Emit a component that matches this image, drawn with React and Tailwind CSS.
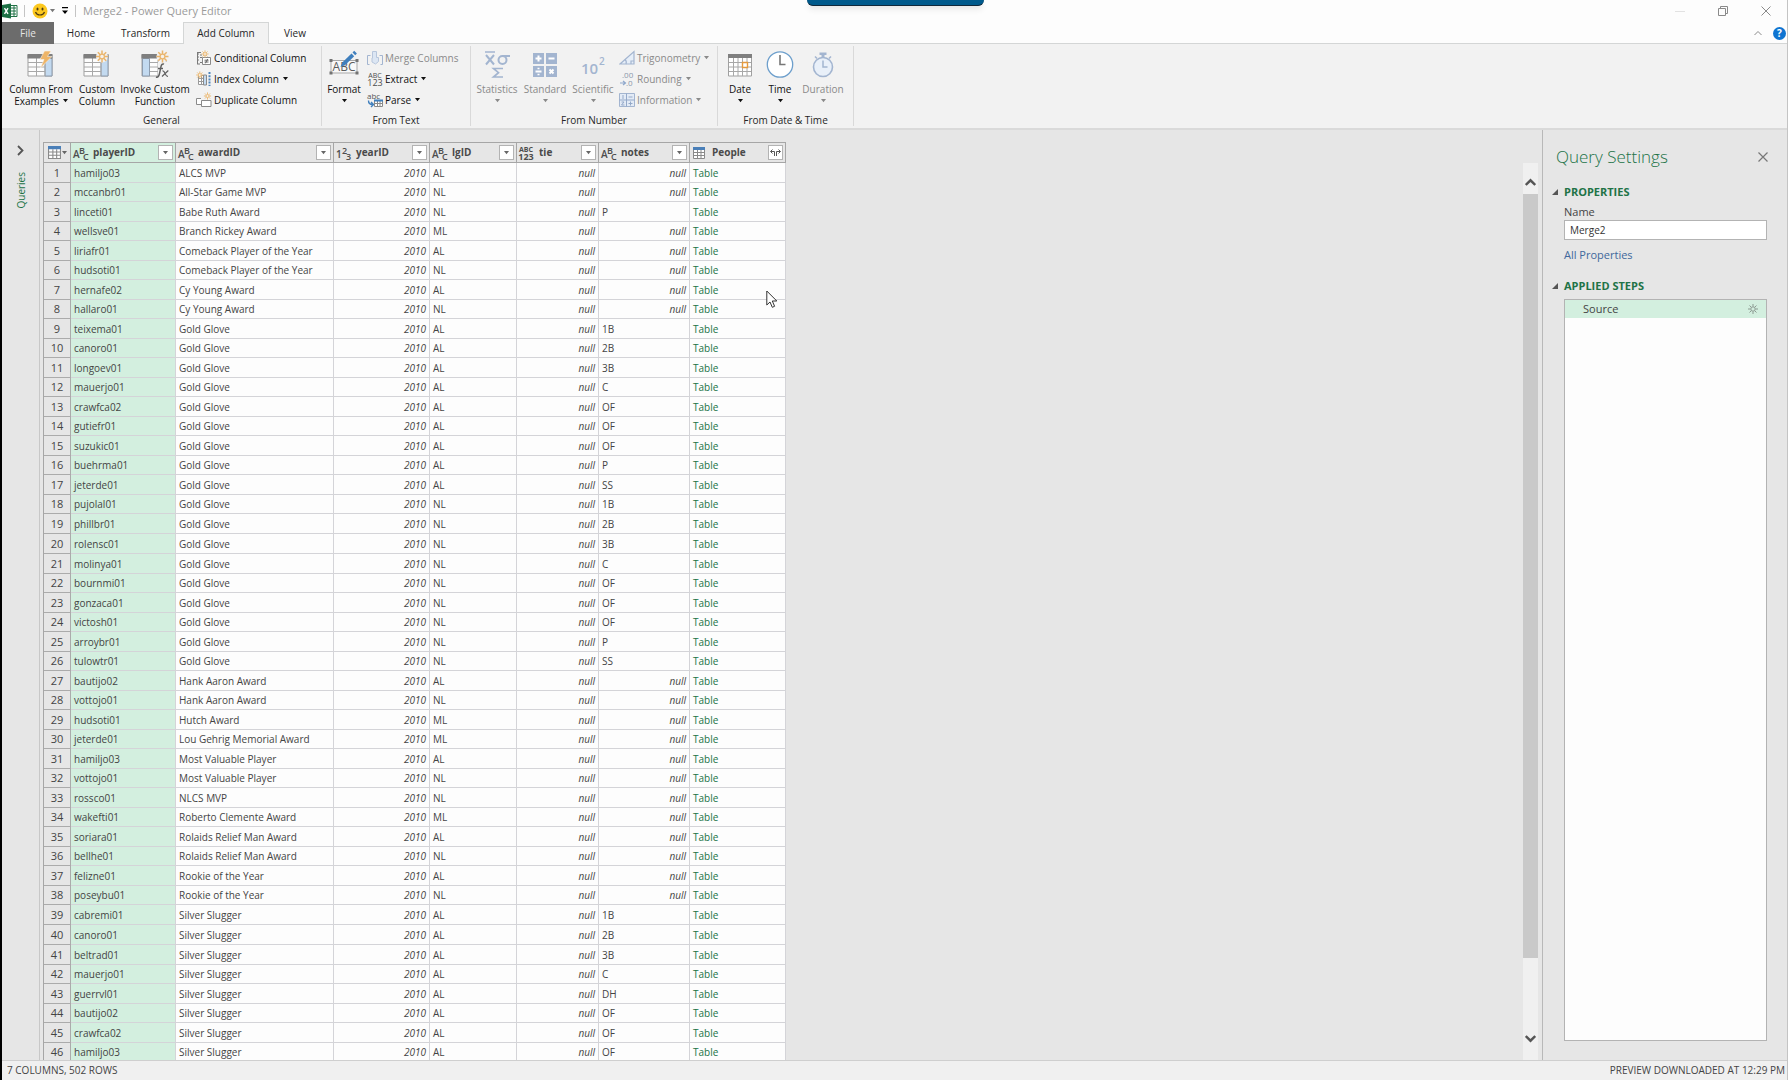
import { useState } from 'react'

const columns = [
    { name: 'playerID', type: 'text', selected: true },
    { name: 'awardID', type: 'text' },
    { name: 'yearID', type: 'number' },
    { name: 'lgID', type: 'text' },
    { name: 'tie', type: 'any' },
    { name: 'notes', type: 'text' },
    { name: 'People', type: 'table' },
]

// player, award, league, notes
const rows = [
    ['hamiljo03', 'ALCS MVP', 'AL', null],
    ['mccanbr01', 'All-Star Game MVP', 'NL', null],
    ['linceti01', 'Babe Ruth Award', 'NL', 'P'],
    ['wellsve01', 'Branch Rickey Award', 'ML', null],
    ['liriafr01', 'Comeback Player of the Year', 'AL', null],
    ['hudsoti01', 'Comeback Player of the Year', 'NL', null],
    ['hernafe02', 'Cy Young Award', 'AL', null],
    ['hallaro01', 'Cy Young Award', 'NL', null],
    ['teixema01', 'Gold Glove', 'AL', '1B'],
    ['canoro01', 'Gold Glove', 'AL', '2B'],
    ['longoev01', 'Gold Glove', 'AL', '3B'],
    ['mauerjo01', 'Gold Glove', 'AL', 'C'],
    ['crawfca02', 'Gold Glove', 'AL', 'OF'],
    ['gutiefr01', 'Gold Glove', 'AL', 'OF'],
    ['suzukic01', 'Gold Glove', 'AL', 'OF'],
    ['buehrma01', 'Gold Glove', 'AL', 'P'],
    ['jeterde01', 'Gold Glove', 'AL', 'SS'],
    ['pujolal01', 'Gold Glove', 'NL', '1B'],
    ['phillbr01', 'Gold Glove', 'NL', '2B'],
    ['rolensc01', 'Gold Glove', 'NL', '3B'],
    ['molinya01', 'Gold Glove', 'NL', 'C'],
    ['bournmi01', 'Gold Glove', 'NL', 'OF'],
    ['gonzaca01', 'Gold Glove', 'NL', 'OF'],
    ['victosh01', 'Gold Glove', 'NL', 'OF'],
    ['arroybr01', 'Gold Glove', 'NL', 'P'],
    ['tulowtr01', 'Gold Glove', 'NL', 'SS'],
    ['bautijo02', 'Hank Aaron Award', 'AL', null],
    ['vottojo01', 'Hank Aaron Award', 'NL', null],
    ['hudsoti01', 'Hutch Award', 'ML', null],
    ['jeterde01', 'Lou Gehrig Memorial Award', 'ML', null],
    ['hamiljo03', 'Most Valuable Player', 'AL', null],
    ['vottojo01', 'Most Valuable Player', 'NL', null],
    ['rossco01', 'NLCS MVP', 'NL', null],
    ['wakefti01', 'Roberto Clemente Award', 'ML', null],
    ['soriara01', 'Rolaids Relief Man Award', 'AL', null],
    ['bellhe01', 'Rolaids Relief Man Award', 'NL', null],
    ['felizne01', 'Rookie of the Year', 'AL', null],
    ['poseybu01', 'Rookie of the Year', 'NL', null],
    ['cabremi01', 'Silver Slugger', 'AL', '1B'],
    ['canoro01', 'Silver Slugger', 'AL', '2B'],
    ['beltrad01', 'Silver Slugger', 'AL', '3B'],
    ['mauerjo01', 'Silver Slugger', 'AL', 'C'],
    ['guerrvl01', 'Silver Slugger', 'AL', 'DH'],
    ['bautijo02', 'Silver Slugger', 'AL', 'OF'],
    ['crawfca02', 'Silver Slugger', 'AL', 'OF'],
    ['hamiljo03', 'Silver Slugger', 'AL', 'OF'],
]

const Caret = ({ className = '' }) => (
    <svg className={`w-[5px] h-[4px] shrink-0 ${className}`} viewBox="0 0 5 4" fill="currentColor"><path d="M0 0h5L2.500 3.300z" /></svg>
)

const Spark = ({ x, y, s = 1 }) => (
    <g transform={`translate(${x} ${y}) scale(${s})`} stroke="#eab56c" strokeWidth="1.5" fill="#f6f1ea">
        <path d="M0-6v12M-6 0h12M-4.2-4.2l8.4 8.4M-4.2 4.2l8.4-8.4" />
        <circle r="2.4" stroke="#eab56c" strokeWidth="1.2" />
    </g>
)

/* ---------- large ribbon icons, 28 x 28 ---------- */

const TableArt = ({ flip }) => (
    <g>
        <path d="M1 5h24v21H1z" fill="#fdfdfd" stroke="#a0a0a0" />
        <path d={flip ? 'M1.5 8.5h7v17.5h-7z' : 'M18 8.5h7v17.5h-7z'} fill="#c3daf0" stroke="#8d9cae" />
        <path d={flip ? 'M9 12.5h16M9 17h16M9 21.5h16M17 8v18' : 'M1 12.5h17M1 17h17M1 21.5h17M9.5 8v18M18 8v18'} stroke="#a8a8a8" fill="none" />
        <path d="M.5 4h25v4.500H.5z" fill="#7f7f7f" />
    </g>
)

const IconExamples = () => (
    <svg className="w-7 h-7" viewBox="0 0 28 28">
        <TableArt />
        <path d="M17.500 1h6.500l-3.500 5.500h4.500L13.500 18l3.500-8.500h-4z" fill="#eeb568" stroke="#f6f1ea" strokeWidth=".6" />
    </svg>
)

const IconCustom = () => (
    <svg className="w-7 h-7" viewBox="0 0 28 28">
        <TableArt />
        <circle cx="19" cy="6.500" r="6" fill="#f2f2f2" />
        <Spark x={19} y={6.5} />
    </svg>
)

const IconInvoke = () => (
    <svg className="w-7 h-7" viewBox="0 0 28 28">
        <TableArt flip />
        <path d="M17 12h11v16H17z" fill="#f2f2f2" />
        <circle cx="21.500" cy="6.500" r="6" fill="#f2f2f2" />
        <Spark x={21.5} y={6.5} />
        <g fill="none" stroke="#5f5f5f" strokeWidth="1.4">
            <path d="M15 27c2 .8 3-1 3.500-3.500l1.500-7c.4-2 1.500-3 3-2.300M17 18.500h5" />
            <path d="M21.500 20.800c3-.5 2 6 5.500 5.500M27.300 20.500L21 26.500" strokeWidth="1.2" />
        </g>
    </svg>
)

const IconFormat = () => (
    <svg className="w-7 h-7 overflow-visible" viewBox="0 0 28 28">
        <path d="M1 10.500h26v12.500H1z" fill="#f8f8f8" stroke="#a8a8a8" />
        <g fill="#737373"><path d="M-.5 9h3v3h-3zM25.500 9h3v3h-3zM-.5 21.500h3v3h-3zM25.500 21.500h3v3h-3z" /></g>
        <text x="14" y="21" textAnchor="middle" fontSize="12" fill="#5c5c5c" className="font-['Open_Sans']">ABC</text>
        <path d="M10.500 17l1.800-4.500L21.500 3.500l2.700 2.700-9.200 9z" fill="#3f7fbd" />
        <path d="M22.500 2.500l1.700-1.700 2.700 2.700-1.700 1.700z" fill="#3f7fbd" />
    </svg>
)

const IconStatistics = () => (
    <svg className="w-7 h-7" viewBox="0 0 28 28" fill="none" stroke="#a3b5d0" strokeWidth="2">
        <path d="M2 2h10" strokeWidth="1.500" />
        <path d="M3 5l8 9.500M11 5l-8 9.500" />
        <circle cx="19.500" cy="10" r="4" /><path d="M19 6h8" />
        <path d="M20 18.500H10.500l5 4.200-5 4.300H20" strokeWidth="1.700" />
    </svg>
)

const IconStandard = () => (
    <svg className="w-7 h-7" viewBox="0 0 28 28">
        <path d="M2 3h11v11H2zM15 3h11v11H15zM2 16h11v11H2zM15 16h11v11H15z" fill="#a3b5d0" />
        <g stroke="#fff" strokeWidth="2" fill="none">
            <path d="M4.500 8.500h6M7.500 5.500v6M17.500 8.500h6M4.500 21.500h6M18.500 19.500l4 4M22.500 19.500l-4 4" />
            <path d="M6.500 18.500h2M6.500 24.500h2" strokeWidth="1.600" />
        </g>
    </svg>
)

const IconScientific = () => (
    <svg className="w-7 h-7 overflow-visible" viewBox="0 0 28 28" fill="#a3b5d0">
        <g className="font-['Open_Sans'] font-semibold">
            <text x="2" y="24" fontSize="15">10</text>
            <text x="20" y="15" fontSize="10">2</text>
        </g>
    </svg>
)

const IconDate = () => (
    <svg className="w-7 h-7" viewBox="0 0 28 28">
        <path d="M2.500 4.500h23v21.500h-23z" fill="#fff" stroke="#a0a0a0" />
        <path d="M3 12.500h22M3 17h22M3 21.500h22M7.500 8v18M12 8v18M16.500 8v18M21 8v18" stroke="#a8a8a8" fill="none" />
        <path d="M2 4h24v4H2z" fill="#7f7f7f" />
        <path d="M16.500 12.500h5v5h-5z" fill="#fff" stroke="#e59a3d" strokeWidth="1.400" />
    </svg>
)

const IconTime = () => (
    <svg className="w-7 h-7" viewBox="0 0 28 28">
        <circle cx="14" cy="14.500" r="12.700" fill="#fff" stroke="#6d9fcc" strokeWidth="1.300" />
        <path d="M14 5v9.500h5.500" fill="none" stroke="#777" strokeWidth="1.600" />
    </svg>
)

const IconDuration = () => (
    <svg className="w-7 h-7" viewBox="0 0 28 28">
        <circle cx="14" cy="17" r="9.500" fill="#e9f0f9" stroke="#a3b5d0" strokeWidth="1.600" />
        <path d="M10.500 2.500h7V5h-2v2.500h-3V5h-2z" fill="#a3b5d0" />
        <path d="M14 10.500V17h4.500M6 6.500l2 2M22 6.500l-2 2" fill="none" stroke="#a3b5d0" strokeWidth="1.500" />
    </svg>
)

/* ---------- small ribbon icons, 16 x 16 ---------- */

const IconConditional = () => (
    <svg className="w-4 h-4" viewBox="0 0 16 16">
        <path d="M1 2.500h4M1.500 2v12M4 5h2M4 7.500h2M4 12.500h2M1 14h3" stroke="#7a7a7a" fill="none" />
        <path d="M1 4h2M1 7h2M1 10h2" stroke="#7a7a7a" />
        <path d="M6.500 7.500h8v7h-8z" fill="#fff" stroke="#8a8a8a" />
        <path d="M8.500 10.200h4M8.500 12h4M11.700 9l-2.300 4.300" stroke="#666" fill="none" />
        <Spark x={9} y={4} s={0.6} />
    </svg>
)

const IconIndex = () => (
    <svg className="w-4 h-4" viewBox="0 0 16 16">
        <path d="M2.500 4.500h8v9h-8zM5.500 4.500v9M2.500 7.500h8M2.500 10.500h8" fill="#fff" stroke="#9a9a9a" />
        <path d="M7.500 4h3v10h-3z" fill="#c3daf0" stroke="#8a8a8a" />
        <path d="M13.500 1v14" stroke="#4f86bd" strokeWidth="2" strokeDasharray="2 1.200" />
        <Spark x={3.8} y={4} s={0.6} />
    </svg>
)

const IconDuplicate = () => (
    <svg className="w-4 h-4" viewBox="0 0 16 16">
        <path d="M5 6.500H.5v6H5" fill="#fff" stroke="#8a8a8a" />
        <path d="M5.500 8.500h9.500v6H5.500z" fill="#fff" stroke="#8a8a8a" />
        <Spark x={11.5} y={4} s={0.6} />
    </svg>
)

const IconMerge = () => (
    <svg className="w-4 h-4" viewBox="0 0 16 16">
        <path d="M3.500 5.500h-3v9h2M12.500 5.500h3v9h-2" fill="none" stroke="#a3b5d0" />
        <path d="M5.500 1.500h4v6h2v4l-3 2.500L5 12v-4h.5z" fill="#dce6f3" stroke="#b7c6dc" />
    </svg>
)

const AbcNumbers = () => (
    <g className="font-['Open_Sans']" textAnchor="middle" fill="#4d4d4d">
        <text x="8" y="7" fontSize="7">ABC</text>
        <text x="8" y="15" fontSize="9">123</text>
    </g>
)

const IconExtract = () => (
    <svg className="w-4 h-4 overflow-visible" viewBox="0 0 16 16"><AbcNumbers /></svg>
)

const IconParse = () => (
    <svg className="w-4 h-4 overflow-visible" viewBox="0 0 16 16">
        <text x="0" y="7" fontSize="8" fill="#555" className="font-['Open_Sans']">abc</text>
        <path d="M1.500 8.500c0 3 1 4 4 4M4 10l2.500 2.500L4 15" fill="none" stroke="#3f7fbd" strokeWidth="1.400" />
        <path d="M7.500 8.500h8v6h-8zM7.500 11.500h8M10.500 8v6M13 8v6" fill="#fff" stroke="#8a8a8a" />
        <path d="M7 7.500h9v2H7z" fill="#3f7fbd" />
    </svg>
)

const IconTrig = () => (
    <svg className="w-4 h-4" viewBox="0 0 16 16" fill="none" stroke="#a3b5d0" strokeWidth="1.200">
        <path d="M15 1.500v12.500H1z" fill="#e6eef8" />
        <path d="M12 14v-3h3M6 9.500c1.200 1 1.500 3 1 4.500" />
    </svg>
)

const IconRounding = () => (
    <svg className="w-4 h-4 overflow-visible" viewBox="0 0 16 16" fill="#8b97aa">
        <g className="font-['Open_Sans']">
            <text x="3" y="7" fontSize="8">.00</text>
            <text x="7" y="15" fontSize="8">.0</text>
        </g>
        <path d="M1 12h5M4 10l2.500 2L4 14" fill="none" stroke="#8fa8cc" strokeWidth="1.200" />
    </svg>
)

const IconInformation = () => (
    <svg className="w-4 h-4" viewBox="0 0 16 16">
        <path d="M.5 1.500h15v13H.5z" fill="#e3ebf6" stroke="#a3b5d0" />
        <path d="M7.500 1.500v13M.5 8h15M9.500 5h4M9.500 11.500h4M11.500 9.500v4M4 3v4M2.500 10h2.500l-2.500 3h3" fill="none" stroke="#94a9c9" />
    </svg>
)

/* ---------- ribbon parts ---------- */

function BigButton({ icon, lines, width, disabled, drop }) {
    return (
        <button disabled={disabled} className={`${width} flex flex-col items-center shrink-0 ${disabled ? 'text-[#8a8a8a]' : 'text-[#111]'}`}>
            {icon}
            <span className="mt-[5px] leading-3 whitespace-nowrap">{lines[0]}</span>
            <span className="h-3 leading-3 flex items-center gap-1 whitespace-nowrap">
                {lines[1]}
                {drop && <Caret />}
            </span>
        </button>
    )
}

function SmallButton({ icon, label, disabled, drop }) {
    return (
        <button disabled={disabled} className={`h-5 flex items-center gap-[2px] whitespace-nowrap ${disabled ? 'text-[#8a8a8a]' : 'text-[#111]'}`}>
            {icon}
            <span>{label}</span>
            {drop && <Caret className="ml-[2px]" />}
        </button>
    )
}

function Group({ title, width, children }) {
    return (
        <section className={`${width} h-20 shrink-0 flex flex-col border-r border-[#d9d9d9]`}>
            <div className="flex h-[68px] pt-[2px]">{children}</div>
            <h2 className="text-center leading-3 text-[#262626]">{title}</h2>
        </section>
    )
}

function Ribbon() {
    return (
        <div className="h-[87px] shrink-0 flex items-start pt-[2px] bg-[#f2f2f2] border-t border-b-2 border-t-[#d4d6d6] border-b-[#dadada] text-[10px]">
            <Group title="General" width="w-[320px]">
                <div className="flex pl-[5px] pt-[2px]">
                    <BigButton icon={<IconExamples />} lines={['Column From', 'Examples']} width="w-[68px]" drop />
                    <BigButton icon={<IconCustom />} lines={['Custom', 'Column']} width="w-[44px]" />
                    <BigButton icon={<IconInvoke />} lines={['Invoke Custom', 'Function']} width="w-[72px]" />
                </div>
                <div className="pl-[5px] flex flex-col gap-px">
                    <SmallButton icon={<IconConditional />} label="Conditional Column" />
                    <SmallButton icon={<IconIndex />} label="Index Column" drop />
                    <SmallButton icon={<IconDuplicate />} label="Duplicate Column" />
                </div>
            </Group>
            <Group title="From Text" width="w-[149px]">
                <div className="flex pl-[2px] pt-[2px]">
                    <BigButton icon={<IconFormat />} lines={['Format', '']} width="w-[40px]" drop />
                </div>
                <div className="pl-[3px] flex flex-col gap-px">
                    <SmallButton icon={<IconMerge />} label="Merge Columns" disabled />
                    <SmallButton icon={<IconExtract />} label="Extract" drop />
                    <SmallButton icon={<IconParse />} label="Parse" drop />
                </div>
            </Group>
            <Group title="From Number" width="w-[247px]">
                <div className="flex pl-[2px] pt-[2px]">
                    <BigButton icon={<IconStatistics />} lines={['Statistics', '']} width="w-[48px]" disabled drop />
                    <BigButton icon={<IconStandard />} lines={['Standard', '']} width="w-[48px]" disabled drop />
                    <BigButton icon={<IconScientific />} lines={['Scientific', '']} width="w-[48px]" disabled drop />
                </div>
                <div className="pl-[2px] flex flex-col gap-px">
                    <SmallButton icon={<IconTrig />} label="Trigonometry" disabled drop />
                    <SmallButton icon={<IconRounding />} label="Rounding" disabled drop />
                    <SmallButton icon={<IconInformation />} label="Information" disabled drop />
                </div>
            </Group>
            <Group title="From Date & Time" width="w-[136px]">
                <div className="flex pl-[2px] pt-[2px]">
                    <BigButton icon={<IconDate />} lines={['Date', '']} width="w-[40px]" drop />
                    <BigButton icon={<IconTime />} lines={['Time', '']} width="w-[40px]" drop />
                    <BigButton icon={<IconDuration />} lines={['Duration', '']} width="w-[46px]" disabled drop />
                </div>
            </Group>
        </div>
    )
}

function TitleBar() {
    return (
        <header className="h-[22px] shrink-0 flex items-center pr-4 text-[#9b9b9b]">
            <svg className="w-4 h-4" viewBox="0 0 16 16">
                <path d="M8 2.500h7v11H8z" fill="#fff" stroke="#217346" />
                <path d="M9 5h5M9 8h5M9 11h5M12 3v10" stroke="#217346" fill="none" />
                <path d="M0 2l9-1.500v15L0 14z" fill="#1c7044" />
                <path d="M2.500 5.200l3.500 5.600M6 5.200l-3.500 5.600" stroke="#fff" strokeWidth="1.400" />
            </svg>
            <span className="w-px h-3 ml-[6px] bg-[#c4c4c4]" />
            <button aria-label="Feedback" className="ml-[7px] flex items-center gap-[2px]">
                <svg className="w-4 h-4" viewBox="0 0 16 16">
                    <circle cx="8" cy="8" r="7.500" fill="#fcc81f" />
                    <ellipse cx="5.500" cy="6" rx="1" ry="1.500" fill="#4e3b12" /><ellipse cx="10.500" cy="6" rx="1" ry="1.500" fill="#4e3b12" />
                    <path d="M3.500 9c1.500 4 7.500 4 9 0" fill="none" stroke="#4e3b12" strokeWidth="1.200" />
                </svg>
                <Caret className="text-[#777]" />
            </button>
            <button aria-label="Customize toolbar" className="ml-[6px] text-black">
                <svg className="w-[8px] h-2" viewBox="0 0 8 8"><path d="M1 0h6v1.200H1zM1 3.500h6L4 7z" /></svg>
            </button>
            <span className="w-px h-3 ml-[6px] bg-[#c4c4c4]" />
            <h1 className="ml-[7px] text-[11px]">Merge2 - Power Query Editor</h1>
            <div className="ml-auto flex items-center gap-[33px]">
                <button aria-label="Minimize"><svg className="w-[10px] h-[10px]" viewBox="0 0 10 10"><path d="M0 5.500h10" stroke="#e2e2e2" /></svg></button>
                <button aria-label="Restore"><svg className="w-[10px] h-[10px]" viewBox="0 0 10 10" fill="none" stroke="#8a8a8a"><path d="M.5 2.500h7v7h-7zM2.500 2.500v-2h7v7h-2" /></svg></button>
                <button aria-label="Close"><svg className="w-[10px] h-[10px]" viewBox="0 0 10 10" stroke="#8a8a8a"><path d="M.5.5l9 9M9.500.5l-9 9" /></svg></button>
            </div>
        </header>
    )
}

function Tabs() {
    return (
        <nav className="relative h-[22px] -mb-px shrink-0 flex items-stretch text-[10px] text-[#262626]">
            <button className="w-[52px] bg-[#6c6c6c] text-[#e6e6e6]">File</button>
            <button className="w-[54px]">Home</button>
            <button className="w-[75px]">Transform</button>
            <button className="w-[86px] border border-b-0 border-[#d4d6d6] bg-[#f2f2f2]">Add Column</button>
            <button className="w-[52px]">View</button>
            <div className="ml-auto pr-[1px] flex items-center gap-[11px]">
                <button aria-label="Collapse ribbon"><svg className="w-2 h-[6px]" viewBox="0 0 8 6" fill="none" stroke="#8a8a8a"><path d="M.5 5L4 1.500 7.500 5" /></svg></button>
                <button aria-label="Help" className="w-[13px] h-[13px] rounded-full bg-[#0f74d1] text-white text-[10px] leading-[13px] font-bold">?</button>
            </div>
        </nav>
    )
}

/* ---------- preview grid ---------- */

const TableGlyph = ({ className }) => (
    <svg className={className} viewBox="0 0 12 12">
        <path d="M.5.5h11v11H.5z" fill="#fff" stroke="#8a8a8a" />
        <path d="M.5 5.500h11M.5 8.500h11M4.500 3v9M8 3v9" stroke="#8a8a8a" fill="none" />
        <path d="M0 0h12v3H0z" fill="#4a7fb8" />
    </svg>
)

function TypeIcon({ type }) {
    if (type === 'table') return <TableGlyph className="w-3 h-3 mx-[3px]" />
    const [a, b, c] = type === 'text' ? 'ABC' : '123'
    return (
        <svg className="w-4 h-4 mx-[1px] overflow-visible" viewBox="0 0 16 16" fill="#4d4d4d">
            {type === 'any' ? <AbcNumbers /> : (
                <g className="font-['Open_Sans'] font-semibold">
                    <text x="1" y="13" fontSize="10">{a}</text>
                    <text x="7" y="9" fontSize="9">{b}</text>
                    <text x="11" y="15" fontSize="9">{c}</text>
                </g>
            )}
        </svg>
    )
}

function HeaderCell({ column }) {
    return (
        <th className={`p-0 border-r border-b border-[#a6a6a6] ${column.selected ? 'bg-[#d3efdf]' : 'bg-[#e6e6e6]'}`}>
            <div className="h-[19px] flex items-center pr-[2px]">
                <TypeIcon type={column.type} />
                <span className="ml-[4px] text-[10px] font-bold text-[#4a4a4a]">{column.name}</span>
                <button aria-label={`${column.name} options`} className="ml-auto w-[15px] h-[15px] flex items-center justify-center bg-white border border-[#b3b3b3] text-[#666]">
                    {column.type === 'table' ? (
                        <svg className="w-[11px] h-[9px] shrink-0" viewBox="0 0 11 9" fill="none" stroke="#555"><path d="M4.500 8V3.500H.8M2.500 1.500l-2 2 2 2M6.500 8V3.500h3.700M8.500 1.500l2 2-2 2" /></svg>
                    ) : <Caret />}
                </button>
            </div>
        </th>
    )
}

const cell = 'p-0 px-[3px] border-r border-b border-[#d4d4d8] leading-[18px]'

function Value({ value }) {
    return value === null
        ? <td className={`${cell} text-right italic`}>null</td>
        : <td className={cell}>{value}</td>
}

function PreviewTable() {
    return (
        <table className="w-[743px] table-fixed border-separate border-spacing-0 border-t border-l border-[#a6a6a6] bg-[#fdfdfd] text-[10px] text-[#444] text-left">
            <colgroup>
                <col className="w-[27px]" />
                <col className="w-[105px]" />
                <col className="w-[158px]" />
                <col className="w-[96px]" />
                <col className="w-[87px]" />
                <col className="w-[82px]" />
                <col className="w-[91px]" />
                <col className="w-[96px]" />
            </colgroup>
            <thead>
                <tr>
                    <th className="p-0 border-r border-b border-[#a6a6a6] bg-[#e6e6e6]">
                        <button aria-label="Table options" className="flex items-center gap-px pl-1">
                            <TableGlyph className="w-[13px] h-[13px]" />
                            <Caret className="text-[#666]" />
                        </button>
                    </th>
                    {columns.map(c => <HeaderCell key={c.name} column={c} />)}
                </tr>
            </thead>
            <tbody>
                {rows.map(([player, award, league, notes], i) => {
                    const n = i + 1
                    return (
                        <tr key={n} className={n % 2 === 1 || n % 20 === 0 ? 'h-5' : 'h-[19px]'}>
                            <th className="p-0 border-r border-b border-[#ababab] bg-[#e6e6e6] text-center text-[11px] leading-[18px] font-normal">{n}</th>
                            <td className={`${cell} bg-[#d3efdf]`}>{player}</td>
                            <td className={cell}>{award}</td>
                            <td className={`${cell} text-right italic`}>2010</td>
                            <td className={cell}>{league}</td>
                            <td className={`${cell} text-right italic`}>null</td>
                            <Value value={notes} />
                            <td className={cell}><a href="#people" className="text-[#217346]">Table</a></td>
                        </tr>
                    )
                })}
            </tbody>
        </table>
    )
}

function ScrollBar() {
    return (
        <div className="w-[15px] mt-[33px] mr-1 shrink-0 flex flex-col bg-[#f0f0f0]">
            <button aria-label="Scroll up" className="h-[31px] flex items-end justify-center pb-[7px]">
                <svg className="w-[11px] h-[9px]" viewBox="0 0 11 9" fill="none" stroke="#555" strokeWidth="2.400"><path d="M.8 7l4.700-4.700L10.200 7" /></svg>
            </button>
            <div className="flex-1 flex flex-col">
                <div className="basis-[91%] bg-[#c9c9c9]" />
            </div>
            <button aria-label="Scroll down" className="h-[26px] flex items-start justify-center">
                <svg className="w-[11px] h-[9px]" viewBox="0 0 11 9" fill="none" stroke="#555" strokeWidth="2.400"><path d="M.8 2l4.700 4.700L10.200 2" /></svg>
            </button>
        </div>
    )
}

/* ---------- right pane ---------- */

function SectionTitle({ children }) {
    return (
        <h3 className="flex items-center gap-[6px] text-[11px] leading-4 font-bold text-[#217346]">
            <svg className="w-[6px] h-[6px]" viewBox="0 0 6 6" fill="#555"><path d="M6 0v6H0z" /></svg>
            {children}
        </h3>
    )
}

function QuerySettings() {
    const [name, setName] = useState('Merge2')

    return (
        <aside className="w-[245px] shrink-0 flex flex-col border-l border-[#b8b8b8] pl-[9px] pr-[20px] pb-[19px] text-[11px] text-[#444]">
            <div className="pt-[15px] pl-1 -mr-px flex items-center justify-between">
                <h2 className="text-[17px] leading-6 font-light text-[#217346]">Query Settings</h2>
                <button aria-label="Close pane"><svg className="w-[10px] h-[10px]" viewBox="0 0 10 10" stroke="#777" strokeWidth="1.200"><path d="M.5.5l9 9M9.500.5l-9 9" /></svg></button>
            </div>
            <div className="mt-[15px]"><SectionTitle>PROPERTIES</SectionTitle></div>
            <label htmlFor="query-name" className="pl-3 mt-1 leading-4">Name</label>
            <input
                id="query-name"
                value={name}
                onChange={(e) => setName(e.target.value)}
                className="ml-3 h-5 px-[5px] bg-white border border-[#b3b3b3] text-[10px] text-[#333]"
            />
            <a href="#properties" className="ml-3 mt-[7px] leading-4 text-[#41689c]">All Properties</a>
            <div className="mt-[15px]"><SectionTitle>APPLIED STEPS</SectionTitle></div>
            <ul className="ml-3 mt-[5px] flex-1 bg-[#fdfdfd] border border-[#b3b3b3]">
                <li className="h-[18px] pl-[18px] pr-2 flex items-center justify-between bg-[#d3efdf]">
                    Source
                    <button aria-label="Edit step">
                        <svg className="w-[10px] h-[10px]" viewBox="0 0 10 10" fill="none" stroke="#8c9a92"><circle cx="5" cy="5" r="2.200" /><path d="M5 0v2.500M5 7.500V10M0 5h2.500M7.500 5H10M1.500 1.500l1.800 1.800M6.700 6.700l1.800 1.800M8.500 1.500L6.700 3.300M3.300 6.700L1.500 8.500" /></svg>
                    </button>
                </li>
            </ul>
        </aside>
    )
}

export default function App() {
    return (
        <div className="relative h-screen flex flex-col overflow-hidden border-l-2 border-l-black border-r border-r-[#c4c4c4] bg-[#fdfdfd] font-['Open_Sans',sans-serif]">
            <div className="absolute top-0 left-[805px] w-[177px] h-[6px] rounded-b-md bg-[#005a8c] border-b border-[#10283a] shadow-md" />
            <TitleBar />
            <Tabs />
            <Ribbon />
            <main className="flex-1 min-h-0 flex bg-[#e6e6e6]">
                <button aria-label="Expand queries" className="w-[38px] shrink-0 flex flex-col items-center pt-[15px] gap-4 border-r border-[#c8c8c8]">
                    <svg className="w-[7px] h-[11px]" viewBox="0 0 7 11" fill="none" stroke="#555" strokeWidth="1.800"><path d="M1 1l4.500 4.500L1 10" /></svg>
                    <span className="[writing-mode:vertical-rl] rotate-180 text-[10px] leading-4 text-[#217346]">Queries</span>
                </button>
                <div className="relative flex-1 min-w-0 overflow-hidden pl-[3px] pt-3">
                    <PreviewTable />
                    <svg className="absolute left-[726px] top-[160px] w-3 h-5" viewBox="0 0 12 20" fill="#fff" stroke="#333"><path d="M.8 1v14l3.200-3 2.300 5.300 2.300-1L6.300 11h4.500z" /></svg>
                </div>
                <ScrollBar />
                <QuerySettings />
            </main>
            <footer className="h-5 shrink-0 flex items-center justify-between pl-[5px] pr-[2px] border-t border-[#cfcfcf] bg-[#f0f0f0] text-[10px] text-[#444]">
                <span>7 COLUMNS, 502 ROWS</span>
                <span>PREVIEW DOWNLOADED AT 12:29 PM</span>
            </footer>
        </div>
    )
}
